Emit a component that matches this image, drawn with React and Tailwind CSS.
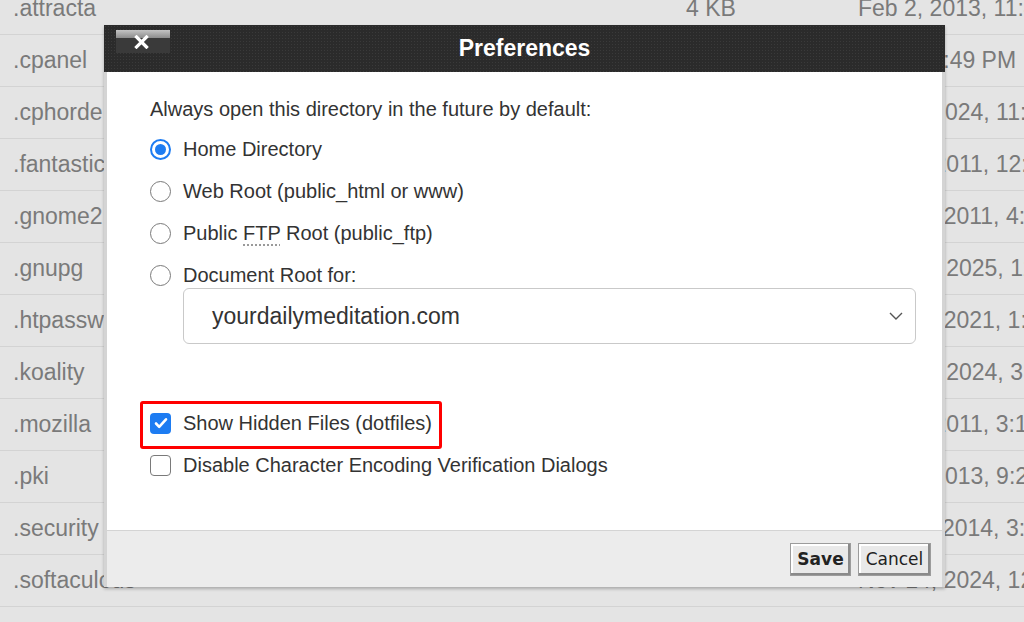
import { useState } from "react";

const files = [
  { name: ".attracta", size: "4 KB", date: "Feb 2, 2013, 11:47 AM" },
  { name: ".cpanel", size: "4 KB", date: "Today, 1:49 PM" },
  { name: ".cphorde", size: "4 KB", date: "Jul 19, 2024, 11:02 AM" },
  { name: ".fantastico_backups", size: "4 KB", date: "May 9, 2011, 12:14 PM" },
  { name: ".gnome2", size: "4 KB", date: "Nov 13, 2011, 4:33 PM" },
  { name: ".gnupg", size: "4 KB", date: "May 23, 2025, 12:41 PM" },
  { name: ".htpasswds", size: "4 KB", date: "Nov 16, 2021, 1:03 PM" },
  { name: ".koality", size: "4 KB", date: "May 14, 2024, 3:18 PM" },
  { name: ".mozilla", size: "4 KB", date: "May 9, 2011, 3:12 PM" },
  { name: ".pki", size: "4 KB", date: "Jul 17, 2013, 9:25 AM" },
  { name: ".security", size: "4 KB", date: "Dec 11, 2014, 3:09 PM" },
  { name: ".softaculous", size: "", date: "Nov 14, 2024, 12:30 PM" },
  { name: ".spamassassin", size: "", date: "Nov 14, 2024, 12:31 PM" },
];

const Radio = ({ checked }) => (
  <span
    className={`flex h-[21px] w-[21px] shrink-0 items-center justify-center rounded-full bg-white ${
      checked ? "border-2 border-[#1d7cf2]" : "border-[1.5px] border-[#7a7a7a]"
    }`}
  >
    {checked && <span className="h-[11px] w-[11px] rounded-full bg-[#1d7cf2]" />}
  </span>
);

const Checkbox = ({ checked }) =>
  checked ? (
    <span className="flex h-[21px] w-[21px] shrink-0 items-center justify-center rounded-[4px] bg-[#1d7cf2]">
      <svg viewBox="0 0 16 16" className="h-[16px] w-[16px]">
        <path d="M3 8.5l3.2 3.3L13 4.3" fill="none" stroke="#fff" strokeWidth="2.6" strokeLinecap="round" strokeLinejoin="round" />
      </svg>
    </span>
  ) : (
    <span className="h-[21px] w-[21px] shrink-0 rounded-[4px] border-[1.5px] border-[#7a7a7a] bg-white" />
  );

export default function App() {
  const [dir, setDir] = useState("home");

  const options = [
    { id: "home", label: "Home Directory" },
    { id: "web", label: "Web Root (public_html or www)" },
    {
      id: "ftp",
      label: (
        <>
          Public{" "}
          <abbr className="no-underline">
            <span className="underline decoration-dotted decoration-[#9a9a9a] underline-offset-[4px]">FTP</span>
          </abbr>{" "}
          Root (public_ftp)
        </>
      ),
    },
  ];

  return (
    <div className="relative h-[622px] w-[1024px] overflow-hidden bg-[#e4e4e4] font-['Liberation_Sans',Arial,sans-serif]">
      {/* lista de archivos detras */}
      <div className="-mt-[17px]">
        {files.map((f) => (
          <div
            key={f.name}
            className="grid h-[52px] grid-cols-[673px_172px_1fr] items-center border-b border-[#d3d3d3] pl-[13px] text-[23px] whitespace-nowrap text-[#7a7a7a]"
          >
            <span>{f.name}</span>
            <span>{f.size}</span>
            <span>{f.date}</span>
          </div>
        ))}
      </div>

      {/* modal */}
      <div className="absolute left-[104px] top-[25px] w-[841px] shadow-[0_2px_3px_rgba(0,0,0,0.25)]">
        <div className="grid h-[47px] grid-cols-[1fr_auto_1fr] bg-[#2b2b2b] bg-[radial-gradient(#3a3a3a_1px,transparent_1px)] bg-[length:3px_3px]">
          <button className="ml-[12px] mt-[5px] flex h-[23px] w-[54px] flex-col self-start overflow-hidden">
            <span className="h-[8px] w-full bg-[linear-gradient(#c4c4c4,#8c8c8c)]" />
            <span className="flex-1 w-full bg-[#3a3a3a]" />
            <svg viewBox="0 0 14 14" className="absolute ml-[18px] mt-[5px] h-[14px] w-[15px]">
              <path d="M2 2l10 10M12 2L2 12" stroke="#fff" strokeWidth="3.2" strokeLinecap="square" />
            </svg>
          </button>
          <h2 className="self-center text-[23px] font-bold text-white">Preferences</h2>
          <span />
        </div>

        <div className="h-[458px] border-x-[3px] border-[#d4d4d4] bg-white pl-[43px] pr-[26px] pt-[25px] text-[20px] text-[#333]">
          <p className="h-[24px] leading-[24px]">Always open this directory in the future by default:</p>

          <div className="mt-[16px] flex flex-col gap-[18px]">
            {options.map((o) => (
              <label key={o.id} className="flex h-[24px] items-center gap-[12px]" onClick={() => setDir(o.id)}>
                <Radio checked={dir === o.id} />
                <span>{o.label}</span>
              </label>
            ))}
            <div>
              <label className="flex h-[24px] items-center gap-[12px]" onClick={() => setDir("doc")}>
                <Radio checked={dir === "doc"} />
                <span>Document Root for:</span>
              </label>
              <div className="ml-[33px] mt-[1px] flex h-[56px] items-center justify-between rounded-[6px] border border-[#c9c9c9] pl-[28px] pr-[12px] text-[23px]">
                <span>yourdailymeditation.com</span>
                <svg viewBox="0 0 14 8" className="h-[8px] w-[14px]">
                  <path d="M1 1l6 6 6-6" fill="none" stroke="#555" strokeWidth="1.4" />
                </svg>
              </div>
            </div>
          </div>

          <div className="-ml-[10px] mt-[57px] inline-flex rounded-[3px] border-[3px] border-[#ff0000] pb-[11px] pl-[7px] pr-[7px] pt-[7px]">
            <label className="flex h-[24px] items-center gap-[12px]">
              <Checkbox checked />
              <span>Show Hidden Files (dotfiles)</span>
            </label>
          </div>
          <label className="mt-[4px] flex h-[24px] items-center gap-[12px]">
            <Checkbox />
            <span>Disable Character Encoding Verification Dialogs</span>
          </label>
        </div>

        <div className="flex h-[57px] items-center justify-end gap-[7px] border-x-[3px] border-t border-[#d4d4d4] bg-[#ececec] pr-[11px] pt-[1px] font-['DejaVu_Sans',Verdana,sans-serif] text-[17px] text-[#222]">
          <button className="h-[33px] w-[61px] border border-[#9c9c9c] bg-[#e9e9e9] font-bold shadow-[inset_-2px_-2px_0_#8a8a8a,inset_2px_2px_0_#fff]">
            Save
          </button>
          <button className="h-[33px] w-[73px] border border-[#9c9c9c] bg-[#e9e9e9] shadow-[inset_-2px_-2px_0_#8a8a8a,inset_2px_2px_0_#fff]">
            Cancel
          </button>
        </div>
      </div>
    </div>
  );
}
